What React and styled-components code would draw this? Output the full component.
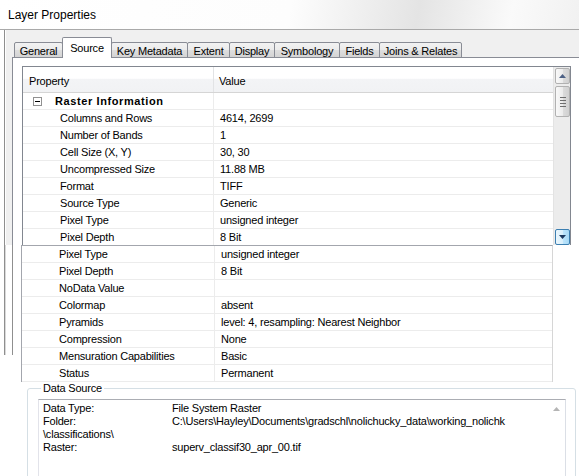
import React from 'react';
import styled, { createGlobalStyle } from 'styled-components';

const GlobalStyle = createGlobalStyle`
  html, body { margin: 0; padding: 0; background: #fff; }
  body {
    font-family: "Liberation Sans", Tahoma, Arial, sans-serif;
    font-size: 11px;
    color: #000;
  }
`

const Page = styled.div`
  width: 579px;
  height: 476px;
  overflow: hidden;
  display: flex;
  flex-direction: column;
  letter-spacing: -0.2px;
`
const Window = styled.div`
  flex: none;
  height: 245px;
  display: flex;
  flex-direction: column;
  overflow: hidden;
`
const TitleBar = styled.div`
  flex: none;
  height: 29px;
  display: flex;
  align-items: center;
  padding-left: 8px;
  font-size: 12px;
  letter-spacing: 0;
  border-bottom: 1px solid #a9a9a9;
  background: linear-gradient(100deg, #fff 0%, #fdfdfd 50%, #e4e4e4 72%, #fafafa 88%, #f1f1f1 100%);
`
const Client = styled.div`
  flex: 1;
  display: flex;
  flex-direction: column;
  margin-left: 4px;
  padding: 7px 0 0 7px;
  border-left: 1px solid #8f8f8f;
  box-shadow: inset 1px 0 #fff;
  background: #f0f0f0;
`
const TabStrip = styled.div`
  display: flex;
  align-items: flex-end;
  height: 21px;
  margin: 0 0 -1px 2px;
  position: relative;
  z-index: 1;
`
const Tab = styled.div`
  box-sizing: border-box;
  width: ${p => p.w + 1}px;
  height: ${p => (p.active ? 21 : 16)}px;
  margin-right: -1px;
  display: flex;
  align-items: center;
  justify-content: center;
  padding-top: ${p => (p.active ? 0 : 1)}px;
  border: 1px solid #898c95;
  border-bottom: ${p => (p.active ? 'none' : '1px solid #898c95')};
  border-radius: 2px 2px 0 0;
  background: ${p => (p.active ? '#fff' : 'linear-gradient(#f2f2f2, #ebebeb 50%, #dedede 51%, #d4d4d4)')};
  z-index: ${p => (p.active ? 2 : 1)};
  white-space: nowrap;
`
const Panel = styled.div`
  flex: 1;
  padding: 8px 0 0 9px;
  border-top: 1px solid #898c95;
  border-left: 1px solid #898c95;
  background: #fff;
`
const Grid = styled.div`
  box-sizing: border-box;
  width: 549px;
  height: 181px;
  display: flex;
  border: 1px solid #828790;
  overflow: hidden;
`
const Table = styled.div`
  width: 530px;
  flex: none;
  display: flex;
  flex-direction: column;
`
const Header = styled.div`
  flex: none;
  height: 26px;
  box-sizing: border-box;
  display: flex;
  border-bottom: 1px solid #d5d5d5;
  background: linear-gradient(#fff 0%, #fff 45%, #f3f4f6 50%, #f1f2f4 100%);
`
const HeadCell = styled.div`
  box-sizing: border-box;
  width: ${p => (p.w ? `${p.w}px` : 'auto')};
  flex: ${p => (p.w ? 'none' : 1)};
  display: flex;
  align-items: center;
  padding: 2px 0 0 ${p => p.pad}px;
  border-right: ${p => (p.w ? '1px solid #e2e3e5' : 'none')};
`
const Row = styled.div`
  flex: none;
  height: 17px;
  box-sizing: border-box;
  display: flex;
  border-bottom: 1px solid #ececec;
`
const NameCell = styled.div`
  box-sizing: border-box;
  width: ${p => p.w}px;
  flex: none;
  display: flex;
  align-items: center;
  padding-left: ${p => (p.group ? 10 : 37)}px;
  border-right: 1px solid #ececec;
  white-space: nowrap;
`
const ValueCell = styled.div`
  flex: 1;
  display: flex;
  align-items: center;
  padding-left: 6px;
  white-space: nowrap;
`
const ExpandBox = styled.span`
  box-sizing: border-box;
  width: 9px;
  height: 9px;
  margin-right: 13px;
  border: 1px solid #919191;
  display: flex;
  align-items: center;
  justify-content: center;
  &::after {
    content: '';
    width: 5px;
    height: 1px;
    background: #000;
  }
`
const GroupLabel = styled.span`
  font-weight: bold;
  letter-spacing: 0.6px;
`
const ScrollBar = styled.div`
  width: 17px;
  flex: none;
  display: flex;
  flex-direction: column;
  align-items: center;
  background: #ececec;
  border-left: 1px solid #e3e3e3;
`
const ScrollBtn = styled.div`
  box-sizing: border-box;
  width: 15px;
  height: ${p => p.h || 16}px;
  margin: ${p => p.m || '1px 0'};
  display: flex;
  flex-direction: column;
  align-items: center;
  justify-content: center;
  gap: 2px;
  border: 1px solid ${p => (p.hot ? '#3c7fb1' : '#b1b1b1')};
  border-radius: 2px;
  background: ${p => (p.hot
    ? 'linear-gradient(90deg, #eaf6fd, #d9f0fc 50%, #bee6fd 51%, #a7d9f5)'
    : 'linear-gradient(90deg, #f9f9f9, #ececec 50%, #dcdcdc 51%, #d0d0d0)')};
`
const Grip = styled.span`
  width: 6px;
  height: 1px;
  background: #6e6e6e;
`
const Spacer = styled.div`
  flex: 1;
`

const Fragment = styled.div`
  flex: none;
  height: 137px;
  display: flex;
  align-items: flex-start;
`
const FrameGutter = styled.div`
  width: 21px;
  flex: none;
`
const FrameEdge = styled.div`
  width: 7px;
  height: 110px;
  margin-left: 4px;
  border-left: 1px solid #8f8f8f;
  border-right: 1px solid #8f8f8f;
  box-shadow: inset 1px 0 #d9d9d9;
`
const LooseGrid = styled.div`
  box-sizing: border-box;
  width: 532px;
  height: 137px;
  display: flex;
  flex-direction: column;
  border: 1px solid #a3a6ad;
  border-right-color: #d6d6d6;
  border-bottom: none;
`

const Group = styled.fieldset`
  box-sizing: border-box;
  width: 549px;
  height: 120px;
  margin: 0 0 0 27px;
  padding: 0 9px 0 10px;
  border: 1px solid #d5dfe5;
  border-radius: 3px;
`
const Legend = styled.legend`
  margin-left: 3px;
  padding: 0 2px;
  line-height: 13px;
`
const TextBox = styled.div`
  box-sizing: border-box;
  height: 90px;
  margin-top: 4px;
  display: flex;
  border: 1px solid;
  border-color: #abadb3 #dbdfe6 #e3e9ef #e2e3ea;
`
const InfoList = styled.div`
  flex: 1;
  display: grid;
  grid-template-columns: 129px 1fr;
  grid-auto-rows: 13px;
  align-content: start;
  padding: 2px 0 0 4px;
  line-height: 13px;
  white-space: nowrap;
`
const Wrapped = styled.div`
  grid-column: 1 / -1;
`
const TextScroll = styled.div`
  width: 17px;
  flex: none;
  display: flex;
  flex-direction: column;
  justify-content: space-between;
  align-items: center;
  padding: 7px 0 2px;
`

function Arrow({ up, color = '#4d6185' }) {
  return (
    <svg width="7" height="4" viewBox="0 0 7 4">
      <path d={up ? 'M0 4 L3.5 0 L7 4 Z' : 'M0 0 L7 0 L3.5 4 Z'} fill={color} />
    </svg>
  )
}

const tabs = [
  ['General', 48], ['Source', 49], ['Key Metadata', 76], ['Extent', 42],
  ['Display', 45], ['Symbology', 65], ['Fields', 40], ['Joins & Relates', 82],
]

const topRows = [
  ['Columns and Rows', '4614, 2699'],
  ['Number of Bands', '1'],
  ['Cell Size (X, Y)', '30, 30'],
  ['Uncompressed Size', '11.88 MB'],
  ['Format', 'TIFF'],
  ['Source Type', 'Generic'],
  ['Pixel Type', 'unsigned integer'],
  ['Pixel Depth', '8 Bit'],
]

const lowerRows = [
  ['Pixel Type', 'unsigned integer'],
  ['Pixel Depth', '8 Bit'],
  ['NoData Value', ''],
  ['Colormap', 'absent'],
  ['Pyramids', 'level: 4, resampling: Nearest Neighbor'],
  ['Compression', 'None'],
  ['Mensuration Capabilities', 'Basic'],
  ['Status', 'Permanent'],
]

export default function App() {
  return (
    <Page>
      <GlobalStyle />
      <Window>
        <TitleBar>Layer Properties</TitleBar>
        <Client>
          <TabStrip>
            {tabs.map(([label, w]) => (
              <Tab key={label} w={w} active={label === 'Source'}>{label}</Tab>
            ))}
          </TabStrip>
          <Panel>
            <Grid>
              <Table>
                <Header>
                  <HeadCell w={191} pad={6}>Property</HeadCell>
                  <HeadCell pad={5}>Value</HeadCell>
                </Header>
                <Row>
                  <NameCell w={191} group>
                    <ExpandBox />
                    <GroupLabel>Raster Information</GroupLabel>
                  </NameCell>
                  <ValueCell />
                </Row>
                {topRows.map(([name, value]) => (
                  <Row key={name}>
                    <NameCell w={191}>{name}</NameCell>
                    <ValueCell>{value}</ValueCell>
                  </Row>
                ))}
              </Table>
              <ScrollBar>
                <ScrollBtn><Arrow up /></ScrollBtn>
                <ScrollBtn h={31} m="1px 0 0">
                  <Grip /><Grip /><Grip /><Grip />
                </ScrollBtn>
                <Spacer />
                <ScrollBtn hot m="1px 0 1px"><Arrow color="#1c3a60" /></ScrollBtn>
              </ScrollBar>
            </Grid>
          </Panel>
        </Client>
      </Window>

      <Fragment>
        <FrameGutter>
          <FrameEdge />
        </FrameGutter>
        <LooseGrid>
          {lowerRows.map(([name, value]) => (
            <Row key={name}>
              <NameCell w={193}>{name}</NameCell>
              <ValueCell>{value}</ValueCell>
            </Row>
          ))}
        </LooseGrid>
      </Fragment>

      <Group>
        <Legend>Data Source</Legend>
        <TextBox>
          <InfoList>
            <div>Data Type:</div>
            <div>File System Raster</div>
            <div>Folder:</div>
            <div>{'C:\\Users\\Hayley\\Documents\\gradschl\\nolichucky_data\\working_nolichk'}</div>
            <Wrapped>{'\\classifications\\'}</Wrapped>
            <div>Raster:</div>
            <div>superv_classif30_apr_00.tif</div>
          </InfoList>
          <TextScroll>
            <Arrow up color="#b5b5b5" />
            <Arrow color="#b5b5b5" />
          </TextScroll>
        </TextBox>
      </Group>
    </Page>
  )
}
